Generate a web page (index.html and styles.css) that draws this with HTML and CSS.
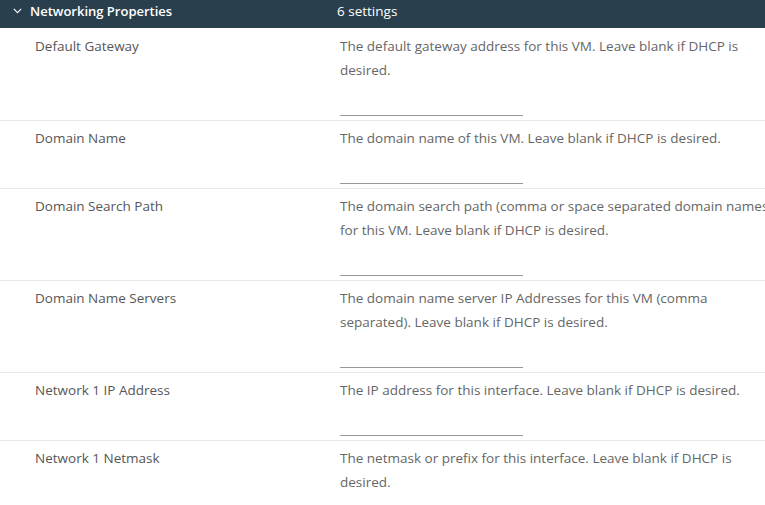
FILE: index.html
```html
<!DOCTYPE html>
<html>
<head>
<meta charset="utf-8">
<link rel="stylesheet" href="styles.css">
</head>
<body>
<div class="panel">
  <div class="header">
    <div class="h-left">
      <svg class="chev" width="9" height="6" viewBox="0 0 9 6"><path d="M0.8 0.8 L4.5 4.6 L8.2 0.8" fill="none" stroke="#ffffff" stroke-width="1.1"/></svg>
      <span class="h-title">Networking Properties</span>
    </div>
    <div class="h-count">6 settings</div>
  </div>
  <div class="row">
    <div class="label">Default Gateway</div>
    <div class="desc"><div class="text">The default gateway address for this VM. Leave blank if DHCP is desired.</div><div class="input"></div></div>
  </div>
  <div class="row">
    <div class="label">Domain Name</div>
    <div class="desc"><div class="text">The domain name of this VM. Leave blank if DHCP is desired.</div><div class="input"></div></div>
  </div>
  <div class="row">
    <div class="label">Domain Search Path</div>
    <div class="desc"><div class="text">The domain search path (comma or space separated domain names) for this VM. Leave blank if DHCP is desired.</div><div class="input"></div></div>
  </div>
  <div class="row">
    <div class="label">Domain Name Servers</div>
    <div class="desc"><div class="text">The domain name server IP Addresses for this VM (comma separated). Leave blank if DHCP is desired.</div><div class="input"></div></div>
  </div>
  <div class="row">
    <div class="label">Network 1 IP Address</div>
    <div class="desc"><div class="text">The IP address for this interface. Leave blank if DHCP is desired.</div><div class="input"></div></div>
  </div>
  <div class="row">
    <div class="label">Network 1 Netmask</div>
    <div class="desc"><div class="text">The netmask or prefix for this interface. Leave blank if DHCP is desired.</div><div class="input"></div></div>
  </div>
</div>
</body>
</html>
```
FILE: styles.css
```css
html, body {
  margin: 0;
  padding: 0;
  background: #ffffff;
  overflow: hidden;
  width: 765px;
  height: 505px;
}
body {
  font-family: "Open Sans", "Noto Sans", sans-serif;
  font-size: 13.5px;
  color: #565656;
}
.panel {
  width: 800px;
  height: 505px;
  overflow: hidden;
}
.header {
  height: 28px;
  background: #2a3f4d;
  color: #ffffff;
  display: flex;
  align-items: flex-start;
  font-size: 13.5px;
  line-height: 22px;
}
.h-left {
  width: 337px;
  display: flex;
  align-items: center;
}
.chev {
  margin-left: 13px;
  margin-right: 8px;
}
.h-title {
  font-weight: 600;
  font-size: 13px;
}
.h-count {
  font-weight: 500;
}
.row {
  display: flex;
  border-top: 1px solid #e8e8e8;
  padding: 5px 0 4px;
}
.row:nth-child(2) {
  border-top: none;
  padding-top: 6px;
}
.label {
  width: 305px;
  padding-left: 35px;
  line-height: 24px;
}
.desc {
  width: 440px;
  line-height: 24px;
  color: #666666;
}
.input {
  margin-top: 10px;
  width: 183px;
  height: 23px;
  border-bottom: 1px solid #999999;
}
```
